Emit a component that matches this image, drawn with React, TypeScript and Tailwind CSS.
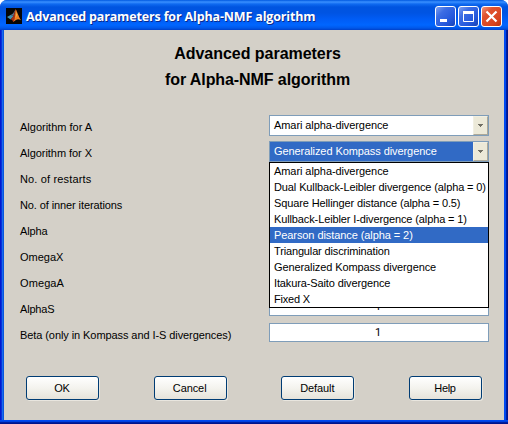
import type { ReactNode } from "react";

type Item = { text: string; spacing: string };

const options: Item[] = [
  { text: "Amari alpha-divergence", spacing: "tracking-[-0.07px]" },
  { text: "Dual Kullback-Leibler divergence (alpha = 0)", spacing: "tracking-[-0.11px]" },
  { text: "Square Hellinger distance (alpha = 0.5)", spacing: "tracking-[-0.12px]" },
  { text: "Kullback-Leibler I-divergence (alpha = 1)", spacing: "tracking-[-0.12px]" },
  { text: "Pearson distance (alpha = 2)", spacing: "tracking-[-0.08px]" },
  { text: "Triangular discrimination", spacing: "tracking-[-0.15px]" },
  { text: "Generalized Kompass divergence", spacing: "tracking-[-0.1px]" },
  { text: "Itakura-Saito divergence", spacing: "tracking-[-0.12px]" },
  { text: "Fixed X", spacing: "tracking-[-0.2px]" },
];

function MatlabIcon() {
  return (
    <svg width="16" height="16" viewBox="0 0 16 16" className="shrink-0">
      <rect width="16" height="16" fill="#050505" />
      <path d="M1 9 L5 6.8 L7.4 8.6 L4.6 11.5 Z" fill="#3f8fb0" />
      <path d="M5 6.8 L7 5.4 L9.5 1.5 L7.4 8.6 Z" fill="#5b6f86" />
      <path d="M4.6 11.5 L7.3 8.2 L9.6 1.2 L10.2 2 L8.6 12.6 L7.2 14 L6 11.8 Z" fill="#a82f13" />
      <path d="M9.7 1.2 C11 3 12.5 8.5 15 12.2 C12 10.3 10.6 11 7.4 14 C9.3 10 9.5 6 9.7 1.2 Z" fill="#ef7d22" />
      <path d="M9.8 3 L11 7 L9.6 10 Z" fill="#f7b54a" />
    </svg>
  );
}

function CaptionButton({ danger, children }: { danger?: boolean; children: ReactNode }) {
  return (
    <div
      className={
        "h-[21px] w-[21px] rounded-[3px] border border-white " +
        (danger
          ? "bg-[linear-gradient(135deg,#f0937a_0%,#e0532f_30%,#d8431e_75%,#b8340f_100%)]"
          : "bg-[linear-gradient(135deg,#7d9ff0_0%,#3c6de4_30%,#2458dc_70%,#1742b4_100%)]")
      }
    >
      <svg width="19" height="19" viewBox="0 0 19 19" fill="none" stroke="#fff">
        {children}
      </svg>
    </div>
  );
}

function Row({ label, spacing, children }: { label: string; spacing: string; children: ReactNode }) {
  return (
    <div className="flex h-[26px] items-start pl-4 pr-[15px]">
      <div className={"w-[249px] pt-[6px] leading-[14px] whitespace-nowrap " + spacing}>{label}</div>
      <div className="w-[220px] shrink-0 pt-px">{children}</div>
    </div>
  );
}

function Combo({ text, selected }: { text: string; selected?: boolean }) {
  return (
    <div className={"flex h-[21px] border border-[#7f9db9] " + (selected ? "bg-[#316ac5] text-white" : "bg-white")}>
      <span className="flex-1 pl-1 pt-px leading-[16px] tracking-[-0.08px] whitespace-nowrap">{text}</span>
      <span className="flex h-[19px] w-[15px] items-center justify-center border border-t-[#f1efe2] border-l-[#f1efe2] border-r-[#aca899] border-b-[#aca899] bg-[#ece9d8]">
        <svg width="5" height="3" viewBox="0 0 5 3" shapeRendering="crispEdges">
          <path d="M0 0h5v1h-1v1h-1v1h-1v-1h-1v-1h-1z" fill="#716f64" />
        </svg>
      </span>
    </div>
  );
}

function Field({ value }: { value?: string }) {
  return (
    <div className="h-[19px] border border-[#7f9db9] bg-white pr-[2px] text-center font-[Roboto,sans-serif] leading-[17px]">
      {value}
    </div>
  );
}

function PushButton({ text, spacing }: { text: string; spacing: string }) {
  return (
    <button
      className={
        "h-[24px] w-[73px] rounded-[3px] border border-[#003c74] bg-linear-to-b from-white via-[#f4f3ee] to-[#e6e3da] pr-px text-center leading-[22px] shadow-[1px_1px_0_#e9e6df] " +
        spacing
      }
    >
      {text}
    </button>
  );
}

export default function App() {
  return (
    <div className="h-[424px] w-[508px] overflow-hidden bg-white font-['Liberation_Sans',Arial,sans-serif] text-[11px] text-black">
      <div className="flex h-full w-full flex-col overflow-hidden rounded-t-[7px] bg-[linear-gradient(90deg,#0019cf_0_1px,#0831d9_1px_2px,#166aee_2px_3px,#0855dd_3px_4px,#0855dd_4px_504px,#0048f0_504px_506px,#001ea0_506px_507px,#00138c_507px)]">
        <header className="flex h-[30px] shrink-0 items-center bg-[linear-gradient(180deg,#0058e0_0px,#3a90ff_2px,#0f6af0_4px,#0054e0_7px,#0054e3_13px,#005cf5_19px,#0066ff_25px,#0058ea_28px,#0040c8_30px)] pl-[6px] pr-[6px] pt-[2px]">
          <MatlabIcon />
          <h1 className="ml-1 flex-1 whitespace-nowrap pt-px font-['Open_Sans',sans-serif] text-[12.5px] leading-[18px] font-bold tracking-[-0.15px] text-white [text-shadow:1px_1px_0_#0a2a8a]">
            Advanced parameters for Alpha-NMF algorithm
          </h1>
          <div className="flex gap-[2px] pt-px">
            <CaptionButton>
              <path d="M4 13.5h7" strokeWidth="3" />
            </CaptionButton>
            <CaptionButton>
              <path d="M4.5 4v10.5h10V4" />
              <path d="M4 5.5h11" strokeWidth="3" />
            </CaptionButton>
            <CaptionButton danger>
              <path d="M4.5 4.5l10 10M14.5 4.5l-10 10" strokeWidth="2.2" />
            </CaptionButton>
          </div>
        </header>
        <main className="mx-1 flex h-[390px] shrink-0 flex-col bg-[#d4d0c8]">
          <div className="flex h-[84px] flex-col pt-[11px] pl-[7px] text-center text-[16px] leading-[26px] font-bold">
            <span className="tracking-[-0.03px]">Advanced parameters</span>
            <span className="tracking-[-0.08px]">for Alpha-NMF algorithm</span>
          </div>
          <Row label="Algorithm for A" spacing="tracking-[0px]">
            <Combo text="Amari alpha-divergence" />
          </Row>
          <Row label="Algorithm for X" spacing="tracking-[-0.05px]">
            <div className="relative">
              <Combo text="Generalized Kompass divergence" selected />
              <ul className="absolute top-[21px] left-0 z-10 w-[220px] border border-black bg-white">
                {options.map((o, i) => (
                  <li
                    key={o.text}
                    className={
                      "h-4 pl-1 leading-4 whitespace-nowrap " + o.spacing + (i === 4 ? " bg-[#316ac5] text-white" : "")
                    }
                  >
                    {o.text}
                  </li>
                ))}
              </ul>
            </div>
          </Row>
          <Row label="No. of restarts" spacing="tracking-[0.15px]"><Field /></Row>
          <Row label="No. of inner iterations" spacing="tracking-[-0.1px]"><Field /></Row>
          <Row label="Alpha" spacing="tracking-[-0.1px]"><Field /></Row>
          <Row label="OmegaX" spacing="tracking-[0px]"><Field /></Row>
          <Row label="OmegaA" spacing="tracking-[0.1px]"><Field /></Row>
          <Row label="AlphaS" spacing="tracking-[-0.2px]"><Field value="1" /></Row>
          <Row label="Beta (only in Kompass and I-S divergences)" spacing="tracking-[-0.08px]"><Field value="1" /></Row>
          <footer className="mt-[28px] flex justify-between pr-[22px] pl-[22px]">
            <PushButton text="OK" spacing="tracking-[-0.3px]" />
            <PushButton text="Cancel" spacing="tracking-[-0.1px]" />
            <PushButton text="Default" spacing="tracking-[-0.1px]" />
            <PushButton text="Help" spacing="tracking-[-0.3px]" />
          </footer>
        </main>
        <div className="h-1 bg-[linear-gradient(180deg,#0048f0_0_1px,#0040e0_1px_2px,#001ea0_2px_3px,#00138c_3px)]" />
      </div>
    </div>
  );
}
